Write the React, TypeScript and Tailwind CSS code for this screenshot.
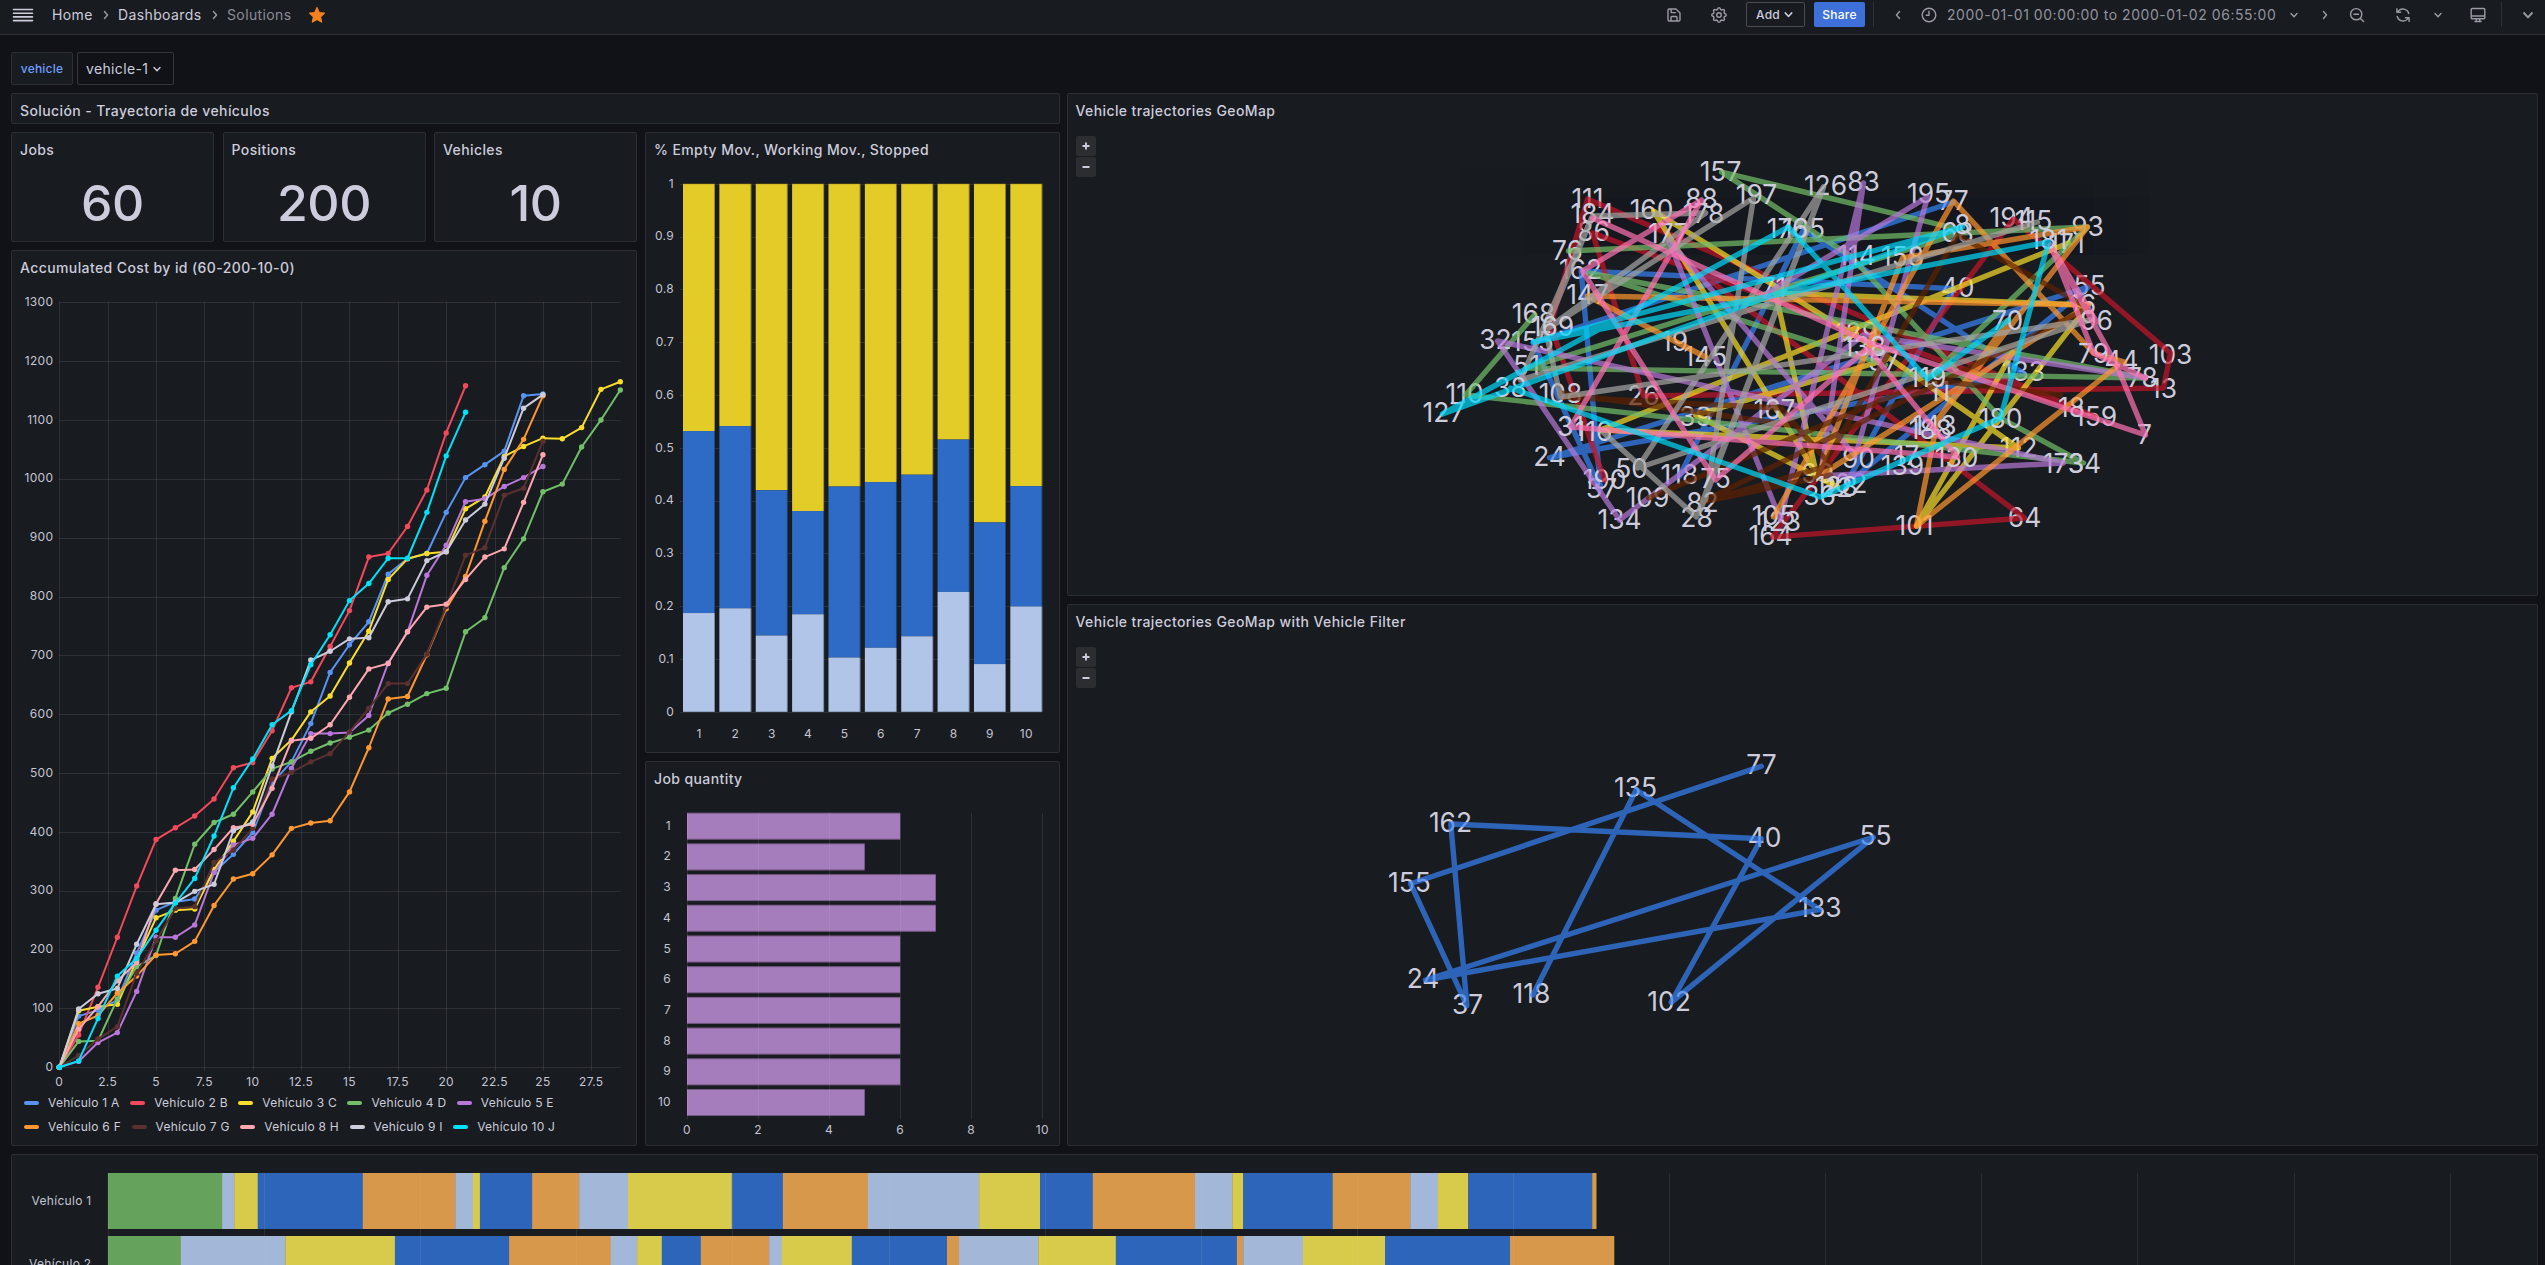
import React from "react";
import type { ReactNode } from "react";

type Pt = [number, number];

const AXIS = "#c4c5d3";
const GRID = "rgba(204,204,220,0.12)";

/* ---------- icons ---------- */

function Chevron({ dir, size = 12, color = "#9a9ba5" }: { dir: "down" | "left" | "right"; size?: number; color?: string }) {
  const d = { down: "M3 4.5 6 7.8 9 4.5", left: "M7.5 2.5 4.5 6 7.5 9.5", right: "M4.5 2.5 7.5 6 4.5 9.5" }[dir];
  return (
    <svg width={size} height={size} viewBox="0 0 12 12" fill="none" stroke={color} strokeWidth="1.4" strokeLinecap="round" strokeLinejoin="round" className="shrink-0">
      <path d={d} />
    </svg>
  );
}

function Icon({ children }: { children: ReactNode }) {
  return (
    <svg width="16" height="16" viewBox="0 0 16 16" fill="none" stroke="#9a9ba5" strokeWidth="1.4" strokeLinecap="round" strokeLinejoin="round" className="shrink-0">
      {children}
    </svg>
  );
}

const gearPath = Array.from({ length: 64 }, (_, i) => {
  const a = (i / 64) * Math.PI * 2;
  const r = 6.4 + 0.75 * Math.max(-1, Math.min(1, Math.cos(a * 8) * 1.8));
  return `${i ? "L" : "M"}${(8 + r * Math.cos(a)).toFixed(2)} ${(8 + r * Math.sin(a)).toFixed(2)}`;
}).join("") + "Z";

/* ---------- panel ---------- */

function Panel({ title, className, children }: { title?: string; className: string; children?: ReactNode }) {
  return (
    <section className={`flex flex-col overflow-hidden rounded-[2px] border border-[#2c2e33] bg-[#181b1f] ${className}`}>
      {title && (
        <h2 className="flex h-[34px] shrink-0 items-center px-2 text-sm font-medium tracking-[0.4px] text-[#ccccdc]">{title}</h2>
      )}
      {children}
    </section>
  );
}

function Stat({ title, value }: { title: string; value: string }) {
  return (
    <Panel title={title} className="h-[110px] w-[203px]">
      <div className="flex flex-1 items-center justify-center pb-0.5 text-[50px] leading-none font-medium tracking-[-0.4px] text-[#ccccdc]">{value}</div>
    </Panel>
  );
}

/* ---------- accumulated cost ---------- */

const series: { name: string; color: string; v: number[] }[] = [
  { name: "Vehículo 1 A", color: "#5794F2", v: [0, 87, 97, 114, 194, 267, 281, 286, 332, 362, 399, 483, 519, 584, 671, 718, 757, 838, 864, 873, 943, 1002, 1024, 1047, 1141, 1144] },
  { name: "Vehículo 2 B", color: "#F2495C", v: [0, 55, 136, 221, 308, 387, 407, 427, 456, 509, 518, 572, 645, 655, 715, 776, 867, 873, 919, 981, 1078, 1158] },
  { name: "Vehículo 3 C", color: "#FADE2A", v: [0, 96, 103, 107, 182, 254, 267, 269, 336, 384, 434, 525, 556, 604, 631, 687, 741, 829, 864, 873, 876, 949, 969, 1038, 1055, 1069, 1068, 1087, 1152, 1165] },
  { name: "Vehículo 4 D", color: "#73BF69", v: [0, 44, 45, 116, 171, 190, 287, 379, 416, 430, 468, 507, 519, 537, 551, 561, 573, 602, 617, 635, 644, 740, 764, 849, 898, 978, 991, 1054, 1100, 1151] },
  { name: "Vehículo 5 E", color: "#B877D9", v: [0, 10, 42, 59, 129, 221, 221, 242, 331, 378, 389, 430, 508, 567, 567, 569, 598, 687, 740, 836, 887, 961, 966, 987, 1002, 1021] },
  { name: "Vehículo 6 F", color: "#FF9830", v: [0, 74, 88, 126, 155, 191, 193, 214, 275, 320, 329, 361, 406, 415, 419, 468, 543, 626, 630, 701, 779, 834, 928, 1016, 1067, 1141] },
  { name: "Vehículo 7 G", color: "#5b3030", v: [0, 20, 48, 69, 160, 215, 270, 273, 348, 369, 406, 490, 501, 519, 533, 570, 610, 652, 652, 702, 783, 870, 883, 972, 984, 1064] },
  { name: "Vehículo 8 H", color: "#FFA6B0", v: [0, 65, 103, 147, 178, 278, 335, 336, 370, 407, 413, 474, 555, 559, 582, 629, 677, 686, 740, 782, 787, 829, 867, 881, 960, 1041] },
  { name: "Vehículo 9 I", color: "#CCCCDC", v: [0, 99, 125, 134, 209, 277, 280, 299, 311, 402, 417, 512, 604, 692, 707, 728, 730, 791, 796, 861, 876, 930, 957, 1035, 1120, 1143] },
  { name: "Vehículo 10 J", color: "#00E1FA", v: [0, 11, 83, 155, 185, 233, 279, 321, 393, 475, 524, 582, 606, 684, 735, 793, 822, 865, 865, 943, 1039, 1113] },
];

function CostChart() {
  const X = (i: number) => 59.3 + i * 19.345;
  const Y = (v: number) => 1067.3 - v * 0.5885;
  return (
    <svg width="624" height="806" viewBox="12 285 624 806" className="block shrink-0 text-xs tracking-[0.3px]" fill={AXIS}>
      {Array.from({ length: 14 }, (_, i) => (
        <g key={i}>
          <path d={`M59 ${Math.round(Y(i * 100)) + 0.5}H620.5`} stroke={GRID} />
          <text x="53.3" y={Y(i * 100) + 3.6} textAnchor="end">{i * 100}</text>
        </g>
      ))}
      {Array.from({ length: 12 }, (_, i) => (
        <g key={i}>
          <path d={`M${Math.round(X(i * 2.5)) + 0.5} 302V1071`} stroke={GRID} />
          <text x={X(i * 2.5)} y="1086" textAnchor="middle">{i * 2.5}</text>
        </g>
      ))}
      {series.map((s) => (
        <g key={s.name} fill={s.color}>
          <polyline points={s.v.map((v, i) => `${X(i)},${Y(v)}`).join(" ")} fill="none" stroke={s.color} strokeWidth="2" strokeLinejoin="round" />
          {s.v.map((v, i) => (
            <circle key={i} cx={X(i)} cy={Y(v)} r="2.7" />
          ))}
        </g>
      ))}
    </svg>
  );
}

function Legend() {
  return (
    <div className="flex flex-col pl-3">
      {[series.slice(0, 5), series.slice(5)].map((row, r) => (
        <ul key={r} className="flex h-6 items-center gap-[10.5px]">
          {row.map((s) => (
            <li key={s.name} className="flex items-center gap-[9px] text-xs tracking-[0.25px] whitespace-nowrap text-[#ccccdc]">
              <span className="h-1 w-[15px] rounded-full" style={{ backgroundColor: s.color }} />
              {s.name}
            </li>
          ))}
        </ul>
      ))}
    </div>
  );
}

/* ---------- stacked bars ---------- */

const lightTop = [0.187, 0.196, 0.1445, 0.1847, 0.1028, 0.1213, 0.143, 0.227, 0.0904, 0.1995];
const blueTop = [0.5317, 0.541, 0.4196, 0.3802, 0.4266, 0.435, 0.449, 0.5155, 0.3586, 0.4274];

function StackedChart() {
  const Y = (v: number) => 711.8 - v * 528.1;
  return (
    <svg width="413" height="584" viewBox="646 167 413 584" className="block text-xs tracking-[0.3px]" fill={AXIS}>
      {Array.from({ length: 11 }, (_, i) => (
        <g key={i}>
          <path d={`M680 ${Math.round(Y(i / 10)) + 0.5}H1042`} stroke={GRID} />
          <text x="674" y={Y(i / 10) + 3.8} textAnchor="end">{i / 10}</text>
        </g>
      ))}
      {lightTop.map((l, i) => {
        const x = 683 + i * 36.37;
        const b = blueTop[i];
        return (
          <g key={i}>
            <rect x={x} y={Y(1)} width="32" height={Y(b) - Y(1)} fill="#e3cb28" />
            <rect x={x} y={Y(b)} width="32" height={Y(l) - Y(b)} fill="#2e6bc7" />
            <rect x={x} y={Y(l)} width="32" height={Y(0) - Y(l)} fill="#b0c5e8" />
            <path d={`M${x + 31.6} ${Y(1)}V${Y(0)}M${x} ${Y(1)}h32`} stroke="#000" strokeOpacity="0.35" />
            <text x={x + 16} y="737.5" textAnchor="middle">{i + 1}</text>
          </g>
        );
      })}
    </svg>
  );
}

/* ---------- job quantity ---------- */

function JobChart() {
  return (
    <svg width="413" height="347" viewBox="646 796 413 347" className="block text-xs tracking-[0.3px]" fill={AXIS}>
      {[6, 5, 7, 7, 6, 6, 6, 6, 6, 5].map((q, i) => {
        const y = 812.7 + i * 30.7;
        return (
          <g key={i}>
            <rect x="687" y={y} width={q * 35.53} height="27" fill="#a67dbc" />
            <path d={`M687 ${y + 0.5}h${q * 35.53}M687 ${y + 26.5}h${q * 35.53}`} stroke="#000" strokeOpacity="0.3" />
            <text x="671" y={y + 17} textAnchor="end">{i + 1}</text>
          </g>
        );
      })}
      {[0, 2, 4, 6, 8, 10].map((n) => (
        <g key={n}>
          <path d={`M${Math.round(687 + n * 35.53) + 0.5} 813V1119`} stroke={GRID} />
          <text x={687 + n * 35.53} y="1134" textAnchor="middle">{n}</text>
        </g>
      ))}
    </svg>
  );
}

/* ---------- maps ---------- */

type Layer = { color: string; lines: Pt[][]; labels: [string, number, number][] };

const layers: Layer[] = [
  {
    color: "#3683F8",
    lines: [[[1953, 202], [1532.5, 342.6], [1600, 489], [1580.7, 271], [1953, 288.6], [1845, 485], [2087.7, 287], [1549, 457.7], [2023.6, 373.8], [1803, 229.8], [1679, 476]]],
    labels: [["77", 1953, 200], ["155", 1532, 341], ["37", 1601, 488], ["162", 1580, 269], ["40", 1957, 287], ["102", 1845, 483], ["55", 2089, 285], ["24", 1549, 456], ["133", 2023, 371], ["135", 1803, 228], ["118", 1679, 474]],
  },
  {
    color: "#C4162A",
    lines: [[[1604, 480], [1550, 325], [1587, 199], [2095, 417], [1592, 233], [1643, 396], [2163, 388], [2170, 353], [2013, 219], [1772, 537], [2024, 518], [1673, 253]]],
    labels: [["190", 1604, 479], ["111", 1587, 198], ["159", 2095, 416], ["86", 1593, 231], ["26", 1643, 395], ["13", 2163, 388], ["103", 2170, 354], ["194", 2011, 217], ["164", 1770, 535], ["64", 2024, 517]],
  },
  {
    color: "#FADE2A",
    lines: [
      [[2068, 243], [1600, 430], [2018, 448], [1870, 345], [1653, 211], [1816, 474], [1775, 293], [2088, 305], [1916, 526], [2012, 352]],
      [[1885, 360], [1695, 415], [1837, 487]],
      [[1845, 338], [1856, 334]],
    ],
    labels: [["171", 2066, 243], ["116", 1593, 431], ["112", 2018, 447], ["160", 1651, 209], ["99", 1817, 473], ["71", 1773, 287], ["101", 1914, 525], ["39", 1695, 416], ["129", 1856, 332], ["22", 1836, 487]],
  },
  {
    color: "#73BF69",
    lines: [
      [[1957, 229], [1721, 172], [1850, 256], [2000, 418], [2083, 463], [1465, 395], [1534, 315]],
      [[1568, 251], [2087, 227], [1927, 379]],
      [[1885, 365], [1588, 273], [2145, 378], [1527, 368], [1957, 234]],
    ],
    labels: [["157", 1720, 171], ["34", 2084, 463], ["110", 1464, 393], ["168", 1533, 313], ["76", 1567, 250], ["93", 2087, 226], ["78", 2142, 377], ["51", 1526, 365], ["57", 1883, 361]],
  },
  {
    color: "#B877D9",
    lines: [[[2145, 378], [1863, 335], [1619, 520], [1497, 341], [2063, 463], [1820, 476], [1863, 183], [1780, 520], [1668, 240], [1855, 456], [1927, 197], [1767, 293]]],
    labels: [["134", 1619, 519], ["32", 1495, 339], ["173", 2063, 463], ["83", 1863, 181], ["123", 1779, 521], ["177", 1668, 233], ["90", 1858, 458], ["195", 1928, 193], ["114", 1856, 255]],
  },
  {
    color: "#FF9830",
    lines: [
      [[1705, 357], [1587, 296], [2088, 305], [1817, 477], [1902, 258], [2087, 227], [1937, 420], [1916, 526], [2117, 366]],
      [[1773, 517], [1953, 201], [2093, 353], [2124, 362]],
      [[2008, 320], [1937, 420]],
      [[1958, 388], [1817, 477]],
    ],
    labels: [["145", 1705, 356], ["147", 1587, 294], ["158", 1902, 256], ["44", 2121, 360], ["105", 1773, 515], ["19", 1674, 341], ["16", 2082, 304], ["18", 2071, 407]],
  },
  {
    color: "#602200",
    lines: [
      [[1560, 397], [1780, 408], [1830, 465], [1702, 502], [2088, 308], [1957, 235], [1818, 474]],
      [[1560, 393], [1790, 425]],
      [[1648, 498], [1930, 380], [2060, 395]],
      [[1830, 475], [1702, 502]],
    ],
    labels: [["108", 1560, 393], ["167", 1774, 409], ["82", 1702, 502], ["109", 1647, 497], ["68", 1957, 232], ["139", 1902, 465], ["11", 1939, 391]],
  },
  {
    color: "#a5a5a2",
    lines: [
      [[1705, 213], [1592, 216], [1545, 330], [1560, 397], [2090, 320], [1637, 468], [1823, 187], [1700, 510]],
      [[1705, 213], [1545, 330], [1753, 198], [1705, 500]],
      [[1600, 430], [1696, 517], [1823, 187]],
      [[2037, 222], [1520, 380], [1592, 216]],
    ],
    labels: [["178", 1703, 213], ["184", 1592, 213], ["96", 2096, 320], ["50", 1631, 468], ["126", 1825, 185], ["28", 1696, 517], ["197", 1756, 194], ["115", 2033, 220]],
  },
  {
    color: "#FF73B4",
    lines: [
      [[1701, 200], [1582, 271], [1715, 480], [1867, 348], [1957, 457], [1570, 427], [1701, 200]],
      [[1592, 218], [1870, 343], [2145, 435], [2116, 365], [2050, 245], [2093, 353], [2145, 378]],
      [[2050, 245], [2096, 322]],
    ],
    labels: [["88", 1701, 198], ["75", 1715, 478], ["130", 1956, 457], ["31", 1570, 426], ["7", 2144, 434], ["79", 2093, 353], ["138", 1864, 346], ["188", 1930, 429], ["143", 1934, 425], ["17", 1906, 455]],
  },
  {
    color: "#00D9FB",
    lines: [
      [[2008, 320], [1927, 379], [1788, 227], [1442, 414], [1962, 227], [1533, 342], [2048, 242], [2000, 418], [1820, 497], [1510, 388]],
    ],
    labels: [["70", 2007, 320], ["119", 1927, 377], ["176", 1787, 228], ["8", 1962, 224], ["127", 1443, 412], ["181", 2048, 239], ["180", 2000, 418], ["38", 1510, 387], ["36", 1819, 495], ["169", 1552, 326], ["128", 1836, 486]],
  },
];

const filterLayer: Layer = {
  color: "#3683F8",
  lines: [[[1760.8, 766.3], [1410, 883.7], [1466.4, 1005.7], [1450.3, 824], [1760.8, 838.7], [1670.7, 1002.3], [1872.8, 837.3], [1425, 980], [1819.4, 909.7], [1635.7, 789.7], [1532.4, 995]]],
  labels: [["77", 1761, 764.5], ["155", 1409, 882], ["37", 1467, 1004.5], ["162", 1450, 822], ["40", 1764, 837], ["102", 1668.5, 1001], ["55", 1875, 835.5], ["24", 1422.5, 978.5], ["133", 1819.5, 907.5], ["135", 1635, 787.5], ["118", 1531, 993.5]],
};

function MapLayer({ layer }: { layer: Layer }) {
  return (
    <g>
      {layer.labels.map(([t, x, y]) => (
        <text key={t} x={x} y={y + 9.6} textAnchor="middle" fontSize="26.4" fill="#ccccdc">{t}</text>
      ))}
      <g opacity="0.7" fill="none" stroke={layer.color} strokeWidth="5.4" strokeLinecap="round" strokeLinejoin="round">
        {layer.lines.map((l, i) => (
          <polyline key={i} points={l.map((p) => p.join(",")).join(" ")} />
        ))}
      </g>
    </g>
  );
}

function MapBody({ children, viewBox, height }: { children: ReactNode; viewBox: string; height: number }) {
  return (
    <div className="flex flex-1 items-start pl-2">
      <div className="mt-2 flex w-5 shrink-0 flex-col gap-px text-[#ccccdc]">
        {["M5.5 10h7M9 6.5v7", "M5.5 10h7"].map((d) => (
          <button key={d} className="flex h-5 w-5 items-center justify-center rounded-[2px] bg-[#2b2d31]">
            <svg width="18" height="20" viewBox="0 0 18 20" stroke="currentColor" strokeWidth="1.9" fill="none"><path d={d} /></svg>
          </button>
        ))}
      </div>
      <svg width="1439" height={height} viewBox={viewBox} className="block">{children}</svg>
    </div>
  );
}

/* ---------- timeline ---------- */

const GREEN = "#65a35c";
const CYCLE = ["#a3b7d9", "#d8cb4b", "#2d65ba", "#d7984b"];
const rows = [
  { label: "Vehículo 1", y: 1173, x: [107.9, 222.1, 234.2, 257.7, 362.8, 455.2, 473, 479.9, 532.1, 579.1, 627.9, 731.8, 782.9, 867.9, 979.1, 1040, 1092.8, 1195, 1232.3, 1243.2, 1332.7, 1410.2, 1437.8, 1468.2, 1592.2, 1596.2] },
  { label: "Vehículo 2", y: 1236, x: [107.9, 180.8, 285.3, 394.9, 509.1, 610.7, 637.1, 661.8, 700.8, 769.1, 781.8, 851.8, 947, 959, 1038.3, 1115.8, 1236.9, 1243.2, 1302.9, 1385, 1510, 1614] },
];

function Timeline() {
  return (
    <svg width="2524" height="110" viewBox="12 1155 2524 110" className="block shrink-0 text-xs tracking-[0.3px]" fill={AXIS}>
      {rows.map((r) => (
        <g key={r.label}>
          <text x="91.5" y={r.y + 31.5} textAnchor="end">{r.label}</text>
          {r.x.slice(1).map((end, i) => (
            <rect key={i} x={r.x[i]} y={r.y} width={end - r.x[i] + 0.3} height="56" fill={i === 0 ? GREEN : CYCLE[(i - 1) % 4]} />
          ))}
        </g>
      ))}
      {Array.from({ length: 16 }, (_, i) => (
        <path key={i} d={`M${Math.round(107.9 + i * 156.12) + 0.5} 1173V1265`} stroke="rgba(204,204,220,0.1)" />
      ))}
    </svg>
  );
}

/* ---------- page ---------- */

function TopBar() {
  return (
    <header className="flex h-[35px] shrink-0 items-center border-b border-[#2f3035] bg-[#181b1f] pb-[5px] text-sm text-[#ccccdc]">
      <svg width="22" height="16" viewBox="0 0 22 16" stroke="#ccccdc" strokeWidth="1.6" strokeLinecap="round" className="ml-3 shrink-0">
        <path d="M1.5 2.5h19M1.5 6.2h19M1.5 9.9h19M1.5 13.6h19" />
      </svg>
      <nav className="ml-[18px] flex items-center tracking-[0.38px]">
        <span className="w-[41px] whitespace-nowrap">Home</span>
        <span className="flex w-[25px] justify-center"><Chevron dir="right" /></span>
        <span className="w-[84px] whitespace-nowrap">Dashboards</span>
        <span className="flex w-[25px] justify-center"><Chevron dir="right" /></span>
        <span className="w-[64px] whitespace-nowrap text-[#8b8c97]">Solutions</span>
      </nav>
      <svg width="18" height="18" viewBox="0 0 24 24" fill="#f5821f" className="ml-[17px]">
        <path d="M12 2l3 6.6 7 .9-5.2 4.9 1.4 7.1L12 18l-6.2 3.5 1.4-7.1L2 9.5l7-.9z" stroke="#f5821f" strokeWidth="1.5" strokeLinejoin="round" />
      </svg>
      <div className="ml-auto flex items-center pr-[9px]">
        <div className="flex w-[45px] justify-center">
          <Icon><path d="M2 3.2A1.2 1.2 0 0 1 3.2 2H10l4 4v6.8a1.2 1.2 0 0 1-1.2 1.2H3.2A1.2 1.2 0 0 1 2 12.8zM5.2 2v3.6h4.3M5 14v-3.6A.9.9 0 0 1 5.9 9.5h4.2a.9.9 0 0 1 .9.9V14" /></Icon>
        </div>
        <div className="flex w-[46px] justify-center">
          <Icon><path d={gearPath} /><circle cx="8" cy="8" r="2.3" /></Icon>
        </div>
        <button className="ml-1 flex h-[25px] w-[59px] items-center justify-center gap-0.5 rounded-[2px] border border-[#4b4c53] text-xs font-medium tracking-[0.3px] text-[#ccccdc]">
          Add <Chevron dir="down" color="#ccccdc" size={13} />
        </button>
        <button className="ml-[9px] flex h-[25px] w-[51px] items-center justify-center rounded-[2px] bg-[#3d71d9] text-xs font-medium tracking-[0.3px] text-white">Share</button>
        <span className="ml-2 h-[25px] w-px bg-[#2f3137]" />
        <span className="flex w-[47px] justify-center"><Chevron dir="left" /></span>
        <Icon><circle cx="8" cy="8" r="6.8" /><path d="M8 4.3V8.3H5.3" /></Icon>
        <span className="ml-[10px] w-[329px] text-sm tracking-[0.54px] whitespace-nowrap text-[#92939e]">2000-01-01 00:00:00 to 2000-01-02 06:55:00</span>
        <span className="ml-3"><Chevron dir="down" /></span>
        <span className="ml-[19px]"><Chevron dir="right" /></span>
        <span className="ml-[18px]"><Icon><circle cx="7.2" cy="7.2" r="5.6" /><path d="M11.4 11.4l3.2 3.2M4.9 7.2h4.6" /></Icon></span>
        <span className="ml-[30px]"><Icon><path d="M13.8 6.5A6.2 6.2 0 0 0 3.2 4.1M1.9 1.6v3.7h3.7M2.2 9.5a6.2 6.2 0 0 0 10.6 2.4M14.1 14.4v-3.7h-3.7" /></Icon></span>
        <span className="ml-[21px]"><Chevron dir="down" /></span>
        <span className="ml-[26px]"><Icon><path d="M2.2 1.5h11.6a1 1 0 0 1 1 1v8.2a1 1 0 0 1-1 1H2.2a1 1 0 0 1-1-1V2.500a1 1 0 0 1 1-1zM1.2 9h13.6M6.3 11.9v2.6M9.7 11.9v2.6M5 14.5h6" /></Icon></span>
        <span className="ml-[15px] h-[25px] w-px bg-[#2f3137]" />
        <span className="ml-[18px]"><Chevron dir="down" size={16} /></span>
      </div>
    </header>
  );
}

export default function App() {
  return (
    <div className="flex h-[1265px] w-[2545px] flex-col overflow-hidden bg-[#111217] font-['Inter',sans-serif]">
      <TopBar />
      <div className="mt-[17px] ml-[11px] flex h-[33px] shrink-0 gap-1">
        <span className="flex w-[62px] items-center justify-center rounded-[2px] border border-[#2c2e33] bg-[#181b1f] text-xs font-medium tracking-[0.2px] text-[#6e9fff]">vehicle</span>
        <button className="flex w-[97px] items-center gap-[3px] rounded-[2px] border border-[#35363c] pl-2 text-sm tracking-[0.35px] text-[#ccccdc]">
          vehicle-1 <Chevron dir="down" color="#ccccdc" />
        </button>
      </div>

      <main className="mt-2 ml-[11px] flex shrink-0 gap-[7px]">
        <div className="flex w-[1048.5px] flex-col gap-2">
          <Panel title="Solución - Trayectoria de vehículos" className="h-[31px]" />
          <div className="flex gap-2">
            <div className="flex w-[626px] shrink-0 flex-col gap-2">
              <div className="flex justify-between">
                <Stat title="Jobs" value="60" />
                <Stat title="Positions" value="200" />
                <Stat title="Vehicles" value="10" />
              </div>
              <Panel title="Accumulated Cost by id (60-200-10-0)" className="h-[896px]">
                <CostChart />
                <Legend />
              </Panel>
            </div>
            <div className="flex w-[414.5px] shrink-0 flex-col gap-2">
              <Panel title="% Empty Mov., Working Mov., Stopped" className="h-[621px]"><StackedChart /></Panel>
              <Panel title="Job quantity" className="h-[385px]"><JobChart /></Panel>
            </div>
          </div>
        </div>
        <div className="flex w-[1471px] flex-col gap-2">
          <Panel title="Vehicle trajectories GeoMap" className="h-[503px]">
            <MapBody viewBox="1095.5 128 1439 455" height={455}>
              {layers.map((l) => <MapLayer key={l.color} layer={l} />)}
            </MapBody>
          </Panel>
          <Panel title="Vehicle trajectories GeoMap with Vehicle Filter" className="h-[542px]">
            <MapBody viewBox="1095.5 639 1439 495" height={495}>
              <MapLayer layer={filterLayer} />
            </MapBody>
          </Panel>
        </div>
      </main>

      <Panel className="mt-2 ml-[11px] h-[140px] w-[2526.5px] shrink-0"><Timeline /></Panel>
    </div>
  );
}
